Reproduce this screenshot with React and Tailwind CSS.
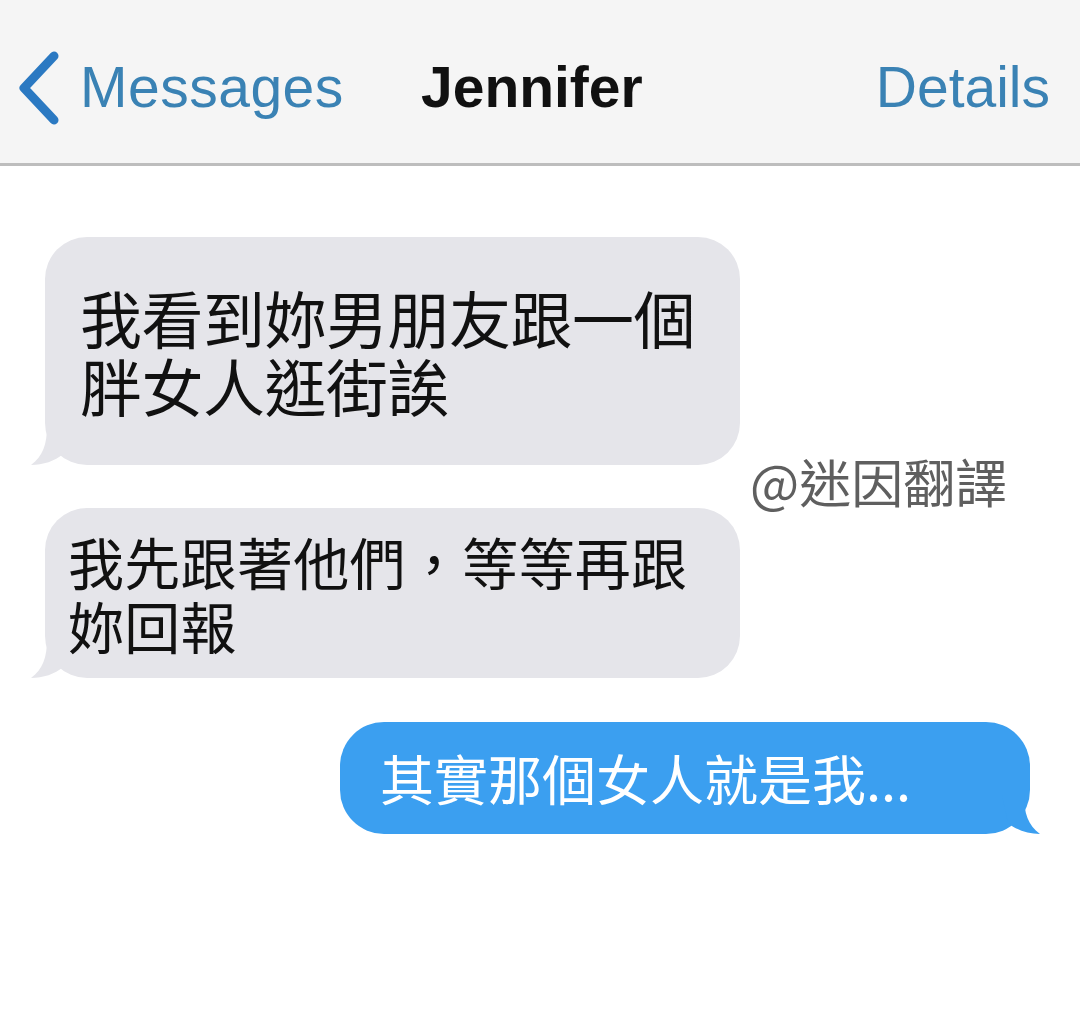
const cjk = { fontFamily: '"Noto Sans CJK TC", "Noto Sans CJK SC", sans-serif' }
const latin = { fontFamily: '"Liberation Sans", Arial, sans-serif' }

function LeftTail({ color }) {
  return (
    <svg className="absolute left-[-20px] bottom-[-1px]" width="44" height="40" viewBox="0 0 44 40">
      <path d="M22 0 C22 18 18 30 6 39 C18 39 30 35 38 28 L44 0 Z" fill={color} />
    </svg>
  )
}

function RightTail({ color }) {
  return (
    <svg className="absolute right-[-16px] bottom-[-1px]" width="44" height="40" viewBox="0 0 44 40">
      <path d="M22 0 C22 18 26 30 38 39 C26 39 14 35 6 28 L0 0 Z" fill={color} />
    </svg>
  )
}

export default function App() {
  return (
    <div className="w-[1080px] h-[1030px] bg-white overflow-hidden">
      {/* nav bar */}
      <div className="h-[166px] bg-[#f5f5f5] border-b-[3px] border-[#bdbdbd] flex items-center pt-[12px]" style={latin}>
        <div className="flex items-center w-[400px]">
          <svg className="ml-[15px]" width="48" height="74" viewBox="0 0 48 74">
            <path d="M39 5 L9 37 L39 69" fill="none" stroke="#2b79c2" strokeWidth="9" strokeLinecap="round" strokeLinejoin="round" />
          </svg>
          <span className="ml-[17px] text-[57px] leading-none text-[#3a82b4] tracking-[0.5px]">Messages</span>
        </div>
        <span className="ml-[21px] text-[57px] leading-none font-bold text-[#111]">Jennifer</span>
        <span className="ml-auto mr-[30px] text-[57px] leading-none text-[#3a82b4]">Details</span>
      </div>

      {/* conversation */}
      <div className="relative flex flex-col pt-[71px]" style={cjk}>
        <div className="relative ml-[45px] w-[695px] rounded-[42px] bg-[#e5e5ea] pl-[35px] pr-[20px] py-[46px] text-[62px] leading-[68px] text-[#111] tracking-[-0.5px]">
          <LeftTail color="#e5e5ea" />
          <div className="relative h-[68px]">我看到妳男朋友跟一個</div>
          <div className="relative h-[68px]">胖女人逛街誒</div>
        </div>

        <div className="absolute left-[750px] top-[289px] text-[52px] leading-none text-[#5f5f5f]">@迷因翻譯</div>

        <div className="relative mt-[43px] ml-[45px] w-[695px] rounded-[42px] bg-[#e5e5ea] pl-[23px] pr-[10px] py-[21px] text-[56px] leading-[64px] text-[#111] tracking-[0.3px]">
          <LeftTail color="#e5e5ea" />
          <div className="relative h-[64px]">我先跟著他們，等等再跟</div>
          <div className="relative h-[64px]">妳回報</div>
        </div>

        <div className="relative mt-[44px] ml-[340px] w-[690px] rounded-[44px] bg-[#3b9ff0] pl-[40px] py-[26px] text-[54px] leading-[60px] text-white">
          <RightTail color="#3b9ff0" />
          <div className="relative h-[60px]">其實那個女人就是我...</div>
        </div>
      </div>
    </div>
  )
}
